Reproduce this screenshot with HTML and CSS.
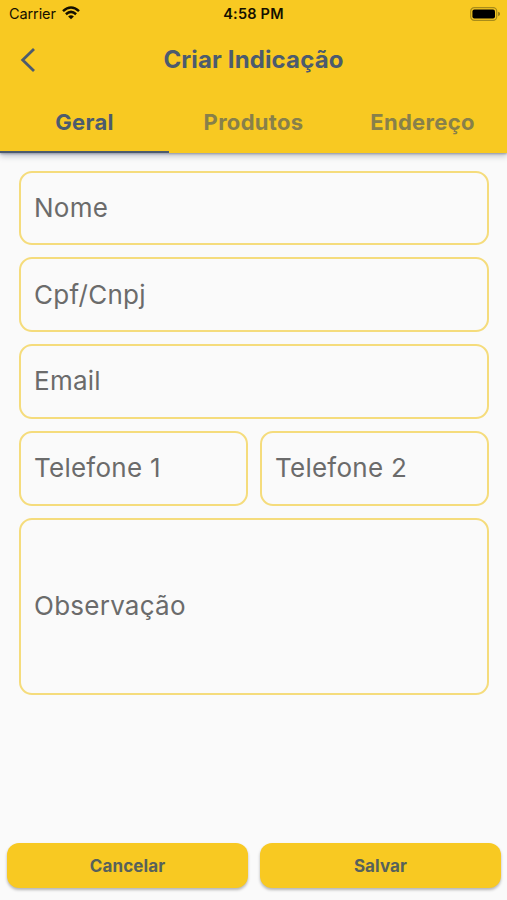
FILE: index.html
```html
<!DOCTYPE html>
<html lang="pt-BR">
<head>
<meta charset="utf-8">
<meta name="viewport" content="width=device-width, initial-scale=1">
<title>Criar Indicação</title>
<link rel="stylesheet" href="styles.css">
</head>
<body>
<div class="screen">
  <header class="app-bar">
    <div class="status">
      <div class="carrier"><span>Carrier</span>
        <svg class="wifi" viewBox="0 0 18 14" width="18" height="14" fill="none" stroke="#151000" stroke-width="2.5"><path d="M1 5.2Q9-2.2 17 5.2M3.9 8.2Q9 3.6 14.1 8.2"/><path d="M9 13.2 6.1 10.4Q9 8.2 11.9 10.4Z" fill="#151000" stroke="none"/></svg>
      </div>
      <span class="time">4:58 PM</span>
      <svg class="battery" viewBox="0 0 31 14" width="31" height="14"><rect x=".7" y=".7" width="26" height="12.6" rx="3.6" fill="none" stroke="#a88c1a" stroke-width="1.2"/><rect x="2.4" y="2.4" width="22.6" height="9.2" rx="2" fill="#000"/><path d="M28.2 4.8Q30 5.4 30 7T28.2 9.2Z" fill="#8d7516"/></svg>
    </div>
    <div class="title-row">
      <svg class="back" viewBox="0 0 16 26" width="16" height="26" fill="none" stroke="#4c5b6e" stroke-width="2.8"><path d="M14 2 2.7 13 14 24"/></svg>
      <h1 class="title">Criar Indicação</h1>
    </div>
    <nav class="tabs">
      <a class="tab active">Geral</a>
      <a class="tab">Produtos</a>
      <a class="tab">Endereço</a>
    </nav>
  </header>
  <main class="form">
    <div class="field"><span>Nome</span></div>
    <div class="field"><span>Cpf/Cnpj</span></div>
    <div class="field"><span>Email</span></div>
    <div class="field-row">
      <div class="field"><span>Telefone 1</span></div>
      <div class="field"><span>Telefone 2</span></div>
    </div>
    <div class="field notes"><span>Observação</span></div>
  </main>
  <footer class="actions">
    <button class="button">Cancelar</button>
    <button class="button">Salvar</button>
  </footer>
</div>
</body>
</html>
```
FILE: styles.css
```css
* { box-sizing: border-box; }
body {
  margin: 0;
  background: #fafafa;
  font-family: Inter, "Liberation Sans", sans-serif;
}
.screen {
  width: 507px;
  height: 900px;
  display: flex;
  flex-direction: column;
  overflow: hidden;
}
.app-bar {
  height: 152.5px;
  flex: none;
  background: #f8c922;
  box-shadow: 0 3px 6px rgba(40, 50, 80, .28), 0 1px 2px rgba(40, 50, 80, .35);
  display: flex;
  flex-direction: column;
}
.status {
  height: 27px;
  padding: 0 6px 0 9px;
  display: grid;
  grid-template-columns: 1fr auto 1fr;
  align-items: center;
  color: #151000;
  font-size: 14.5px;
}
.carrier { display: flex; align-items: center; gap: 6px; letter-spacing: -.1px; }
.wifi { margin-top: -1px; }
.time { font-weight: 600; letter-spacing: .2px; margin-right: 3px; }
.battery { justify-self: end; }
.title-row {
  height: 65px;
  padding: 0 20px;
  display: grid;
  grid-template-columns: 16px 1fr 16px;
  align-items: center;
  text-align: center;
}
.title { margin: 0; color: #4c5b6e; font-size: 24px; font-weight: 700; letter-spacing: .13px; }
.tabs { flex: 1; display: grid; grid-template-columns: repeat(3, 1fr); }
.tab {
  display: flex;
  align-items: center;
  justify-content: center;
  padding-top: 1px;
  border-bottom: 2.5px solid transparent;
  color: #88804a;
  font-size: 22px;
  font-weight: 700;
  letter-spacing: .3px;
}
.tab.active { color: #4c5b6e; border-bottom-color: #4c5b6e; }
.form {
  flex: 1;
  padding: 18px 18px 0 19px;
  display: flex;
  flex-direction: column;
  gap: 12px;
}
.field {
  height: 74.8px;
  flex: none;
  padding: 0 13px 1px;
  border: 2px solid #f5dc7c;
  border-radius: 13px;
  display: flex;
  align-items: center;
  color: #6b6b6b;
  font-size: 26px;
  letter-spacing: .25px;
}
.field-row { display: grid; grid-template-columns: 1fr 1fr; gap: 12px; }
.notes { height: 177.5px; }
.actions {
  height: 57.5px;
  flex: none;
  padding: 0 6px 0 7px;
  display: grid;
  grid-template-columns: 1fr 1fr;
  gap: 12px;
}
.button {
  height: 45px;
  padding: 1px 0 0;
  border: 0;
  border-radius: 12px;
  background: #f8c922;
  box-shadow: 0 2px 3px rgba(0, 0, 0, .28);
  color: #57615b;
  font: 700 17px Inter, "Liberation Sans", sans-serif;
  letter-spacing: .1px;
}
```
